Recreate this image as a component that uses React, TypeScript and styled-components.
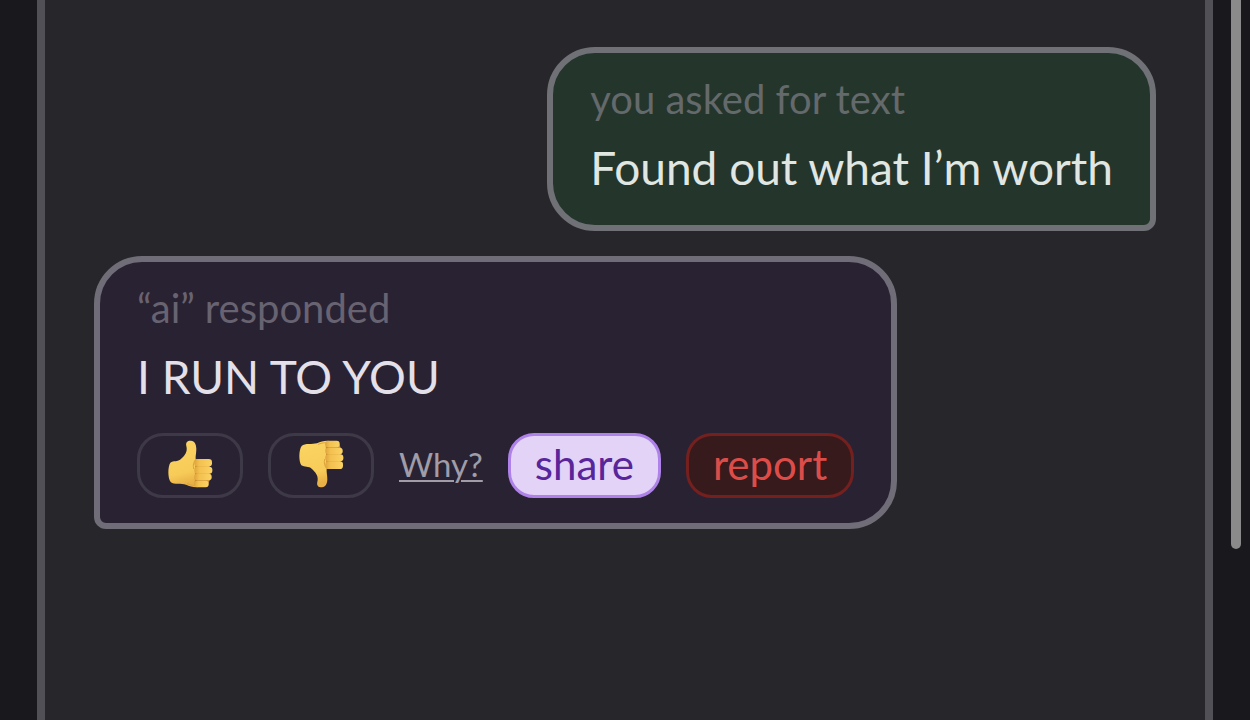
import React from "react";
import styled, { createGlobalStyle } from "styled-components";

const GlobalStyle = createGlobalStyle`
  *, *::before, *::after { box-sizing: border-box; }
  body {
    margin: 0;
    background: #19181d;
    color: #e4e4e7;
    font-family: Lato, sans-serif;
  }
`;

const Page = styled.div`
  display: flex;
  min-height: 100vh;
  padding: 0 37px;
`;

const Panel = styled.main`
  display: flex;
  flex: 1;
  flex-direction: column;
  gap: 25px;
  padding: 47px 49px;
  background: #27262b;
  border: solid #515056;
  border-width: 0 8px;
`;

const ScrollThumb = styled.div`
  position: fixed;
  top: -10px;
  right: 9px;
  width: 10px;
  height: calc(76vh + 12px);
  border-radius: 5px;
  background: #8a8a8b;
`;

const Bubble = styled.article<{ $own?: boolean }>`
  align-self: ${(p) => (p.$own ? "flex-end" : "flex-start")};
  max-width: 100%;
  padding: 24px 37px 25px;
  border: 6px solid ${(p) => (p.$own ? "#707176" : "#706d78")};
  border-radius: ${(p) => (p.$own ? "48px 48px 12px 48px" : "48px 48px 48px 12px")};
  background: ${(p) => (p.$own ? "#24352b" : "#292233")};
`;

const Label = styled.p<{ $own?: boolean }>`
  margin: 0;
  font-size: 40px;
  line-height: 44px;
  color: ${(p) => (p.$own ? "#64696b" : "#686371")};
`;

const Message = styled.p<{ $own?: boolean }>`
  margin: 19px 0 4px;
  font-size: 46px;
  line-height: 56px;
  color: ${(p) => (p.$own ? "#e0e6e2" : "#e4e0e9")};
`;

const Actions = styled.div`
  display: flex;
  flex-wrap: wrap;
  align-items: center;
  gap: 25px;
  margin-top: 28px;
`;

const tones = {
  plain: { bg: "transparent", line: "#3e3947", text: "#e4e0e9" },
  share: { bg: "#e3d3f6", line: "#ae82e8", text: "#59259a" },
  report: { bg: "#371a1b", line: "#74201f", text: "#dc4d4a" },
};

const Pill = styled.button<{ $tone: keyof typeof tones }>`
  display: flex;
  align-items: center;
  justify-content: center;
  height: 65px;
  padding: 0 24px 4px;
  border: 3px solid ${(p) => tones[p.$tone].line};
  border-radius: 26px;
  background: ${(p) => tones[p.$tone].bg};
  color: ${(p) => tones[p.$tone].text};
  font-family: inherit;
  font-size: 42px;
  line-height: 48px;
  cursor: pointer;
`;

const WhyLink = styled.a`
  padding-bottom: 4px;
  color: #a09ca8;
  font-size: 33px;
  line-height: 48px;
  text-decoration: underline;
  text-decoration-thickness: 2px;
  text-underline-offset: 3px;
`;

const Hand = styled.svg<{ $down?: boolean }>`
  display: block;
  width: 52px;
  height: 52px;
  transform: ${(p) => (p.$down ? "scaleY(-1)" : "none")};
`;

function Thumb({ down }: { down?: boolean }) {
  const id = down ? "down" : "up";
  return (
    <Hand $down={down} viewBox="12 12 156 156" aria-hidden="true">
      <defs>
        <linearGradient id={`skin-${id}`} x1="0" y1={down ? "1" : "0"} x2="0.2" y2={down ? "0" : "1"}>
          <stop offset="0" stopColor="#fbd563" />
          <stop offset="0.75" stopColor="#f7cb58" />
          <stop offset="1" stopColor="#e8b046" />
        </linearGradient>
        <linearGradient id={`finger-${id}`} x1="0" y1="0" x2="1" y2="0">
          <stop offset="0" stopColor="#dfa43d" />
          <stop offset="0.3" stopColor="#f3c14f" />
          <stop offset="1" stopColor="#fbd263" />
        </linearGradient>
      </defs>
      <path
        fill={`url(#skin-${id})`}
        d="M79 36C76 24 84 19 93 20C104 21 109 31 109 45C109 57 106 66 107 76L126 77L124 157C110 162 92 159 78 152C64 148 42 153 32 144C23 132 23 98 31 86C40 80 54 84 62 76C73 66 84 54 79 36Z"
      />
      <path
        fill="#c98d34"
        d="M106 77C120 74 143 76 148 79L149 139L142 156C128 161 114 158 104 153Z"
      />
      <g fill={`url(#finger-${id})`}>
        <rect x="103" y="75" width="53" height="23" rx="10" />
        <rect x="103" y="98" width="54" height="21" rx="9" />
        <rect x="103" y="119" width="52" height="20" rx="9" />
        <rect x="103" y="140" width="43" height="20" rx="9" />
      </g>
      <path
        d="M106 78C101 84 98 94 101 104M103 154C96 154 89 152 82 149"
        fill="none"
        stroke="#dda23c"
        strokeWidth="3"
        strokeLinecap="round"
      />
    </Hand>
  );
}

export default function App() {
  return (
    <>
      <GlobalStyle />
      <Page>
        <Panel>
          <Bubble $own>
            <Label $own>you asked for text</Label>
            <Message $own>Found out what I’m worth</Message>
          </Bubble>
          <Bubble>
            <Label>“ai” responded</Label>
            <Message>I RUN TO YOU</Message>
            <Actions>
              <Pill type="button" $tone="plain" aria-label="Good response">
                <Thumb />
              </Pill>
              <Pill type="button" $tone="plain" aria-label="Bad response">
                <Thumb down />
              </Pill>
              <WhyLink href="#why">Why?</WhyLink>
              <Pill type="button" $tone="share">share</Pill>
              <Pill type="button" $tone="report">report</Pill>
            </Actions>
          </Bubble>
        </Panel>
        <ScrollThumb />
      </Page>
    </>
  );
}
